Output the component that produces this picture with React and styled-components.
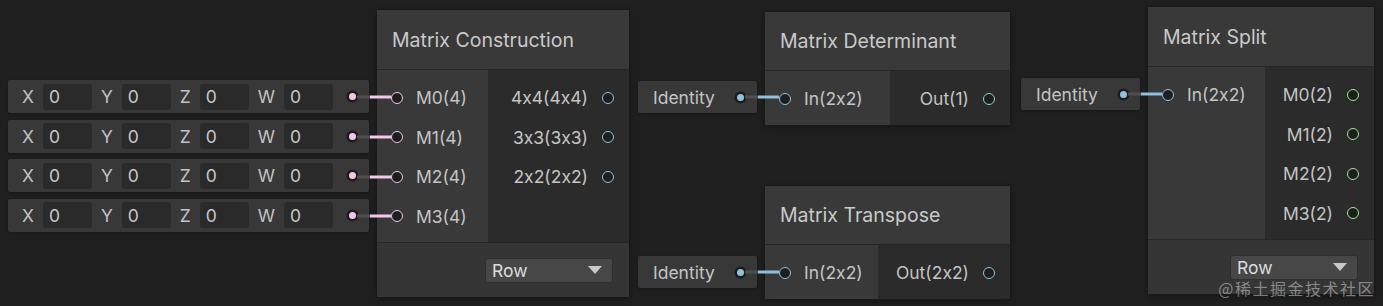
import React from 'react';
import styled, { createGlobalStyle } from 'styled-components';

const PINK = '#f4c6ea';
const BLUE = '#8fc1df';
const CYAN = '#86d9d2';
const GREEN = '#9ae892';

const GlobalStyle = createGlobalStyle`
    html, body {
        margin: 0;
        padding: 0;
        background: #1f1f1f;
    }
    body {
        font-family: Inter, "Noto Sans", "Liberation Sans", sans-serif;
        font-feature-settings: "calt" 0;
        color: #c4c4c4;
    }
`;

const Canvas = styled.div`
    position: relative;
    width: 1383px;
    height: 306px;
    overflow: hidden;
    background: #1f1f1f;
`;

const NodeBox = styled.div`
    position: absolute;
    display: flex;
    flex-direction: column;
    background: #2b2b2b;
    box-shadow: 0 0 0 1px #191919, 0 2px 6px rgba(0, 0, 0, 0.35);
    border-radius: 2px;
`;

const Title = styled.div`
    height: ${p => p.$h}px;
    display: flex;
    align-items: center;
    padding-left: 15px;
    background: #393939;
    border-bottom: 1px solid #262626;
    font-size: 19.5px;
    color: #c9c9c9;
    box-sizing: border-box;
`;

const Body = styled.div`
    display: flex;
`;

const Column = styled.div`
    display: flex;
    flex-direction: column;
    padding: 8px 0 6px;
    background: ${p => (p.$input ? '#393939' : '#2b2b2b')};
    ${p => p.$input && `width: ${p.$w}px; flex: none;`}
    ${p => !p.$input && 'flex: 1;'}
`;

const PortRow = styled.div`
    height: 39.5px;
    display: flex;
    align-items: center;
    justify-content: ${p => (p.$out ? 'flex-end' : 'flex-start')};
    gap: ${p => (p.$out ? 14 : 13)}px;
    padding: ${p => (p.$out ? '0 15px 0 0' : '0 0 0 14px')};
    font-size: 17.5px;
    color: #c4c4c4;
`;

const Port = styled.span`
    width: 10px;
    height: 10px;
    border-radius: 50%;
    border: 1.8px solid ${p => p.$color};
    background: #1e1e1e;
    flex: none;
`;

const Footer = styled.div`
    height: 55px;
    display: flex;
    align-items: center;
    justify-content: flex-end;
    padding-right: 16px;
    background: #353535;
    border-top: 1px solid #262626;
    box-sizing: border-box;
`;

const Dropdown = styled.div`
    width: 128px;
    height: 25px;
    display: flex;
    align-items: center;
    justify-content: space-between;
    padding: 0 10px 0 6px;
    box-sizing: border-box;
    background: #474747;
    border: 1px solid #2f2f2f;
    border-radius: 3px;
    font-size: 17.5px;
    color: #dcdcdc;
`;

const Arrow = styled.span`
    width: 0;
    height: 0;
    border-left: 7px solid transparent;
    border-right: 7px solid transparent;
    border-top: 8px solid #c8c8c8;
`;

const VectorStack = styled.div`
    position: absolute;
    left: 8px;
    top: 80px;
    display: flex;
    flex-direction: column;
    gap: 6.6px;
`;

const Chip = styled.div`
    position: absolute;
    display: flex;
    align-items: center;
    height: ${p => p.$h || 32}px;
    padding-left: 15px;
    padding-right: 13px;
    background: #383838;
    border-radius: 2px;
    box-shadow: 0 1px 3px rgba(0, 0, 0, 0.3);
    box-sizing: border-box;
    font-size: 17.5px;
    color: #c4c4c4;
`;

const VectorChip = styled(Chip)`
    position: static;
    width: 361px;
    height: 33px;
    padding-left: 14px;
`;

const Axis = styled.span`
    margin-right: 9px;
    color: #c2c2c2;
`;

const Field = styled.span`
    width: 49px;
    height: 26px;
    margin-right: 9px;
    padding-left: 6px;
    box-sizing: border-box;
    display: flex;
    align-items: center;
    background: #2a2a2a;
    border-radius: 3px;
    color: #c8c8c8;
`;

const Dot = styled.span`
    margin-left: auto;
    width: 7px;
    height: 7px;
    border-radius: 50%;
    background: ${p => p.$color};
    box-shadow: 0 0 0 2.5px #1c1c1c;
`;

const Wires = styled.svg`
    position: absolute;
    left: 0;
    top: 0;
    pointer-events: none;
`;

const Watermark = styled.div`
    position: absolute;
    right: 8px;
    bottom: 6px;
    font-family: "Noto Sans CJK SC", "Noto Sans", sans-serif;
    font-size: 16px;
    color: rgba(210, 210, 210, 0.55);
    letter-spacing: 1.5px;
`;

function Node({ x, y, width, inputWidth, titleH = 60, title, inputs, outputs, footer }) {
    return (
        <NodeBox style={{ left: x, top: y, width }}>
            <Title $h={titleH}>{title}</Title>
            <Body>
                <Column $input $w={inputWidth}>
                    {inputs.map(i => (
                        <PortRow key={i.label}>
                            <Port $color={i.color} />
                            {i.label}
                        </PortRow>
                    ))}
                </Column>
                <Column>
                    {outputs.map(o => (
                        <PortRow key={o.label} $out>
                            {o.label}
                            <Port $color={o.color} />
                        </PortRow>
                    ))}
                </Column>
            </Body>
            {footer && (
                <Footer>
                    <Dropdown>
                        {footer}
                        <Arrow />
                    </Dropdown>
                </Footer>
            )}
        </NodeBox>
    );
}

function Vector4() {
    return (
        <VectorChip>
            {['X', 'Y', 'Z', 'W'].map(a => (
                <React.Fragment key={a}>
                    <Axis>{a}</Axis>
                    <Field>0</Field>
                </React.Fragment>
            ))}
            <Dot $color={PINK} />
        </VectorChip>
    );
}

function Identity({ x, y }) {
    return (
        <Chip style={{ left: x, top: y, width: 119 }}>
            Identity
            <Dot $color={BLUE} />
        </Chip>
    );
}

function Wire({ x1, x2, y, color }) {
    return (
        <g>
            <line x1={x1} x2={x1 + 13} y1={y} y2={y} stroke="#4e4e4e" strokeWidth="3" />
            <line x1={x1 + 13} x2={x2} y1={y} y2={y} stroke={color} strokeWidth="3" />
        </g>
    );
}

export default function App() {
    const rows = [97, 137, 177, 216];
    return (
        <Canvas>
            <GlobalStyle />
            <VectorStack>
                {rows.map(r => <Vector4 key={r} />)}
            </VectorStack>

            <Identity x={638} y={81} />
            <Identity x={638} y={256} />
            <Identity x={1021} y={78} />

            <Node
                x={377} y={10} width={252} inputWidth={111}
                title="Matrix Construction"
                inputs={['M0(4)', 'M1(4)', 'M2(4)', 'M3(4)'].map(l => ({ label: l, color: PINK }))}
                outputs={['4x4(4x4)', '3x3(3x3)', '2x2(2x2)'].map(l => ({ label: l, color: BLUE }))}
                footer="Row"
            />
            <Node
                x={765} y={12} width={245} inputWidth={125} titleH={59}
                title="Matrix Determinant"
                inputs={[{ label: 'In(2x2)', color: BLUE }]}
                outputs={[{ label: 'Out(1)', color: CYAN }]}
            />
            <Node
                x={765} y={186} width={245} inputWidth={113} titleH={59}
                title="Matrix Transpose"
                inputs={[{ label: 'In(2x2)', color: BLUE }]}
                outputs={[{ label: 'Out(2x2)', color: BLUE }]}
            />
            <Node
                x={1148} y={7} width={226} inputWidth={117}
                title="Matrix Split"
                inputs={[{ label: 'In(2x2)', color: BLUE }]}
                outputs={['M0(2)', 'M1(2)', 'M2(2)', 'M3(2)'].map(l => ({ label: l, color: GREEN }))}
                footer="Row"
            />

            <Wires width="1383" height="306">
                {rows.map(r => <Wire key={r} x1={357} x2={391} y={r} color={PINK} />)}
                <Wire x1={745} x2={779} y={97} color={BLUE} />
                <Wire x1={745} x2={779} y={272} color={BLUE} />
                <Wire x1={1128} x2={1162} y={94} color={BLUE} />
            </Wires>

            <Watermark>@稀土掘金技术社区</Watermark>
        </Canvas>
    );
}
